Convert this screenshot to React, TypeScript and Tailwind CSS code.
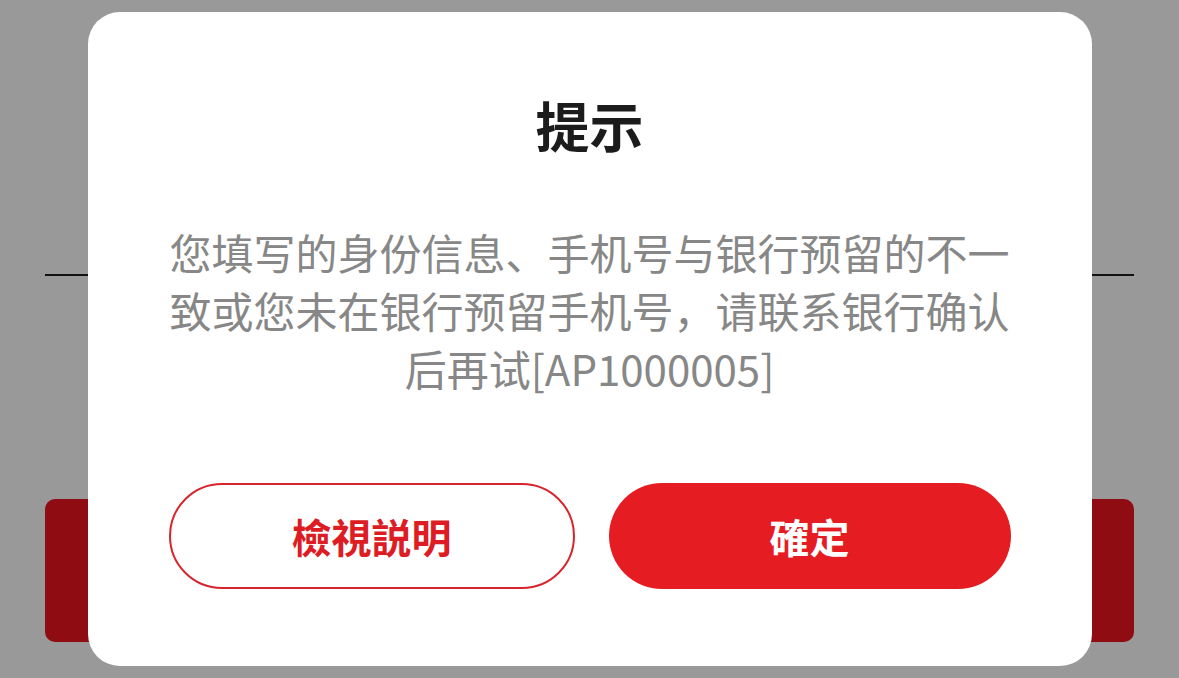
import React from 'react'

const cjk = '"Noto Sans CJK SC", "Noto Sans", sans-serif'
const cjkTc = '"Noto Sans CJK TC", "Noto Sans CJK SC", sans-serif'

export default function App() {
  return (
    <div
      className="relative h-[678px] w-[1179px] overflow-hidden bg-white"
      style={{ fontFamily: cjk }}
    >
      {/* page underneath the dialog */}
      <div className="flex flex-col">
        <div className="mx-[45px] mt-[274px] h-[2px] bg-[#1f1f1f]" />
        <div className="mx-[45px] mt-[223px] h-[143px] rounded-[10px] bg-[#ee161e]" />
      </div>

      {/* overlay + dialog */}
      <div className="absolute inset-0 flex items-center justify-center bg-black/40">
        <div className="flex h-[654px] w-[1004px] flex-col items-center rounded-[32px] bg-white px-[81px]">
          <h2 className="pt-[86px] text-[54px] font-bold leading-none text-[#1c1c1c]">提示</h2>
          <p className="mt-[71px] w-full text-center text-[42px] leading-[58px] text-[#878787]">
            您填写的身份信息、手机号与银行预留的不一致或您未在银行预留手机号，请联系银行确认后再试[AP1000005]
          </p>
          <div className="mt-[86px] flex w-full gap-[34px]" style={{ fontFamily: cjkTc }}>
            <button className="flex h-[106px] flex-1 items-center justify-center rounded-full border-[2.5px] border-[#d8242c] bg-white text-[40px] font-bold text-[#dd1c24]">
              檢視説明
            </button>
            <button className="flex h-[106px] flex-1 items-center justify-center rounded-full bg-[#e61c23] text-[40px] font-bold text-white">
              確定
            </button>
          </div>
        </div>
      </div>
    </div>
  )
}
